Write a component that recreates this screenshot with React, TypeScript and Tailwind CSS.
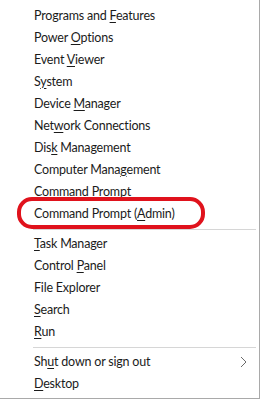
import React from "react";

type Item = { pre: string; key?: string; post?: string; arrow?: boolean };

const g1: Item[] = [
  { pre: "Programs and ", key: "F", post: "eatures" },
  { pre: "Power ", key: "O", post: "ptions" },
  { pre: "Event ", key: "V", post: "iewer" },
  { pre: "S", key: "y", post: "stem" },
  { pre: "Device ", key: "M", post: "anager" },
  { pre: "Net", key: "w", post: "ork Connections" },
  { pre: "Dis", key: "k", post: " Management" },
  { pre: "Computer Mana", key: "g", post: "ement" },
  { pre: "", key: "C", post: "ommand Prompt" },
  { pre: "Command Prompt (", key: "A", post: "dmin)" },
];
const g2: Item[] = [
  { pre: "", key: "T", post: "ask Manager" },
  { pre: "Control ", key: "P", post: "anel" },
  { pre: "File Explorer" },
  { pre: "", key: "S", post: "earch" },
  { pre: "", key: "R", post: "un" },
];
const g3: Item[] = [
  { pre: "Sh", key: "u", post: "t down or sign out", arrow: true },
  { pre: "", key: "D", post: "esktop" },
];

function Row({ it }: { it: Item }) {
  return (
    <div className="h-[22px] flex items-center pl-[34px] pr-[12px] text-[12.5px] tracking-[-0.2px] text-[#1b1b1b] whitespace-nowrap">
      <span className="flex-1">
        {it.pre}
        {it.key && <span className="underline underline-offset-[2px] decoration-[1px]">{it.key}</span>}
        {it.post}
      </span>
      {it.arrow && (
        <svg width="7" height="12" viewBox="0 0 7 12">
          <path d="M1 1 L6 6 L1 11" fill="none" stroke="#6b6b6b" strokeWidth="1" />
        </svg>
      )}
    </div>
  );
}

function Sep() {
  return <div className="ml-[33px] mr-[3px] mt-[4px] mb-[3px] h-px bg-[#d6d6d6]" />;
}

export default function App() {
  return (
    <div className="w-[264px] h-[402px] bg-white" style={{ fontFamily: 'Lato, "Noto Sans", sans-serif' }}>
      <div className="relative w-[260px] bg-white border-r border-b border-[#a9a9a9] pt-[5px] pb-[3px]">
        {g1.map((it, i) => (
          <Row key={i} it={it} />
        ))}
        <Sep />
        {g2.map((it, i) => (
          <Row key={i} it={it} />
        ))}
        <Sep />
        {g3.map((it, i) => (
          <Row key={i} it={it} />
        ))}
        <div className="absolute left-[17px] top-[197px] w-[188px] h-[32px] border-[4px] border-[#e0121c] rounded-[15px] pointer-events-none" />
      </div>
    </div>
  );
}
